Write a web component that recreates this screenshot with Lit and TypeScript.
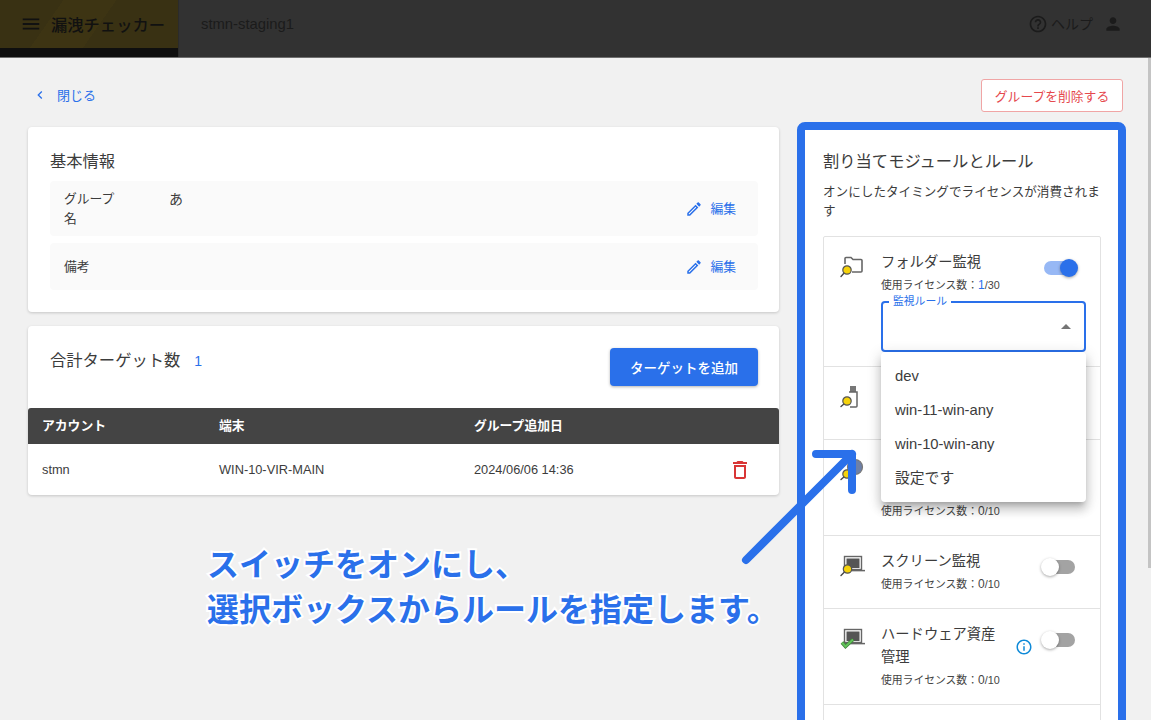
import { LitElement, html, css, svg } from 'lit';
import { customElement } from 'lit/decorators.js';

const P = {
  menu: 'M3 18h18v-2H3v2zm0-5h18v-2H3v2zm0-7v2h18V6H3z',
  back: 'M15.41 7.41L14 6l-6 6 6 6 1.41-1.41L10.83 12z',
  help: 'M11 18h2v-2h-2v2zm1-16C6.48 2 2 6.48 2 12s4.48 10 10 10 10-4.48 10-10S17.52 2 12 2zm0 18c-4.41 0-8-3.59-8-8s3.59-8 8-8 8 3.59 8 8-3.59 8-8 8zm0-14c-2.21 0-4 1.79-4 4h2c0-1.1.9-2 2-2s2 .9 2 2c0 2-3 1.75-3 5h2c0-2.25 3-2.5 3-5 0-2.21-1.79-4-4-4z',
  user: 'M12 12c2.21 0 4-1.79 4-4s-1.79-4-4-4-4 1.79-4 4 1.79 4 4 4zm0 2c-2.67 0-8 1.34-8 4v2h16v-2c0-2.66-5.33-4-8-4z',
  edit: 'M3 17.25V21h3.75L17.81 9.94l-3.75-3.75L3 17.25zM5.92 19H5v-.92l9.06-9.06.92.92L5.92 19zM20.71 5.63l-2.34-2.34c-.2-.2-.45-.29-.71-.29s-.51.1-.7.29l-1.83 1.83 3.75 3.75 1.83-1.83c.39-.39.39-1.02 0-1.41z',
  trash: 'M6 19c0 1.1.9 2 2 2h8c1.1 0 2-.9 2-2V7H6v12zM8 9h8v10H8V9zm7.5-5l-1-1h-5l-1 1H5v2h14V4h-3.5z',
  info: 'M11 7h2v2h-2zm0 4h2v6h-2zm1-9C6.48 2 2 6.48 2 12s4.48 10 10 10 10-4.48 10-10S17.52 2 12 2zm0 18c-4.41 0-8-3.59-8-8s3.59-8 8-8 8 3.59 8 8-3.59 8-8 8z',
};

const icon = (d: string, size: number, cls = '') =>
  html`<svg class=${cls} width=${size} height=${size} viewBox="0 0 24 24" fill="currentColor"><path d=${d}></path></svg>`;

const lens = (cx: number, cy: number) => svg`
  <path d="M${cx - 2.5} ${cy + 2.5}L2 21.5" stroke="#444" stroke-width="1.4" stroke-linecap="round"></path>
  <circle cx=${cx} cy=${cy} r="4.2" fill="#f5d20a" stroke="#555" stroke-width="1.2"></circle>`;

const screen = svg`
  <rect x="5.5" y="2.5" width="17" height="13" fill="#fff" stroke="#666" stroke-width="1.4"></rect>
  <rect x="7.5" y="4.5" width="13" height="9.5" fill="#555"></rect>
  <path d="M4 16.6H26" stroke="#666" stroke-width="1.5"></path>`;

const moduleIcons: Record<string, unknown> = {
  folder: svg`<path d="M6 9V3.5Q6 2.5 7 2.5H12L14 4.5H22Q23 4.5 23 5.5V16Q23 17 22 17H13" fill="none" stroke="#666" stroke-width="1.6"></path>${lens(8, 15)}`,
  usb: svg`<rect x="11" y="1" width="6" height="6" fill="#777"></rect><path d="M10 7H18V21Q18 22 17 22H11" fill="none" stroke="#666" stroke-width="1.5"></path>${lens(8, 16)}`,
  globe: svg`<circle cx="16" cy="9" r="7.5" fill="#6d80a8" stroke="#777" stroke-width="1.2"></circle>${lens(8, 16)}`,
  screen: svg`${screen}${lens(8.5, 15)}`,
  hardware: svg`${screen}
    <path d="M3 15.5L6.5 19.5L14 12.5" fill="none" stroke="#3f7f3c" stroke-width="3.6"></path>
    <path d="M3 15.5L6.5 19.5L14 12.5" fill="none" stroke="#62c25a" stroke-width="2"></path>`,
};

const modules = [
  { icon: 'folder', title: 'フォルダー監視', used: 1, total: 30, on: true, select: true },
  { icon: 'usb', title: '', covered: true },
  { icon: 'globe', title: '', tall: true, used: 0, total: 10 },
  { icon: 'screen', title: 'スクリーン監視', used: 0, total: 10 },
  { icon: 'hardware', title: 'ハードウェア資産管理', used: 0, total: 10, info: true },
];

const rules = ['dev', 'win-11-win-any', 'win-10-win-any', '設定です'];

@customElement('app-root')
export class AppRoot extends LitElement {
  static styles = css`
    :host {
      display: block;
      position: relative;
      height: 720px;
      overflow: hidden;
      background: #f1f1f1;
      color: #3c3c3c;
      font-family: 'Liberation Sans', 'Noto Sans CJK JP', sans-serif;
    }
    svg { display: block; flex-shrink: 0; }

    .header {
      display: flex;
      align-items: flex-start;
      height: 58px;
      box-sizing: border-box;
      background: #323232;
      border-bottom: 1px solid #6f6f6f;
      color: #1b1b1b;
    }
    .brand {
      width: 179px;
      height: 57px;
      flex-shrink: 0;
      border-right: 1px solid #2b2b2b;
      box-sizing: border-box;
      background: #0f0f0f;
    }
    .brand-inner {
      display: flex;
      align-items: center;
      gap: 9px;
      height: 48px;
      padding-left: 20px;
      box-sizing: border-box;
      background: linear-gradient(125deg, #393113 0 30%, #3d3413 30% 55%, #393113 55%);
      color: #111;
      font-size: 16.3px;
      font-weight: 500;
    }
    .env {
      margin: 16px 0 0 22px;
      font-size: 14.8px;
      line-height: 17px;
    }
    .header-right {
      display: flex;
      align-items: center;
      margin-left: auto;
      height: 48px;
      padding-right: 28px;
      font-size: 14px;
    }
    .help { margin: 0 3px 0 0; }
    .help-label { margin-bottom: 2px; }
    .user { margin-left: 10px; }

    .main { padding: 21px 28px 0; }
    .topbar {
      display: flex;
      justify-content: space-between;
      align-items: center;
      height: 33px;
      margin-bottom: 15px;
    }
    .back {
      display: flex;
      align-items: center;
      gap: 9px;
      margin: 0 0 2px 4px;
      color: #2a70ea;
      font-size: 13px;
    }
    .delete {
      width: 142px;
      height: 33px;
      box-sizing: border-box;
      display: flex;
      align-items: center;
      justify-content: center;
      background: #fff;
      border: 1px solid #f0a5a5;
      border-radius: 3px;
      color: #e5484d;
      font-size: 12.8px;
    }
    .columns {
      display: grid;
      grid-template-columns: 751px 329px;
      gap: 18px;
      align-items: start;
    }
    .card {
      background: #fff;
      border-radius: 4px;
      box-shadow: 0 1px 3px rgba(0, 0, 0, 0.18);
      margin-bottom: 14px;
    }
    .info-card { padding: 22px 21px 22px 22px; }
    .heading {
      font-size: 16.3px;
      line-height: 24px;
      color: #3c3c3c;
    }
    .info-card .heading { margin-bottom: 8px; }
    .info-row {
      display: flex;
      align-items: flex-start;
      background: #fafafa;
      border-radius: 4px;
      padding: 8px 22px 7px 14px;
      font-size: 12.8px;
      line-height: 20px;
    }
    .info-row + .info-row { margin-top: 7px; padding-top: 14px; padding-bottom: 13px; }
    .label { width: 58px; margin-right: 47px; }
    .value { flex: 1; font-size: 14px; }
    .edit {
      display: flex;
      align-items: center;
      gap: 7px;
      align-self: center;
      color: #2a70ea;
      font-size: 12.8px;
    }

    .targets-head {
      display: flex;
      justify-content: space-between;
      padding: 22px 21px 22px 22px;
    }
    .count { color: #2a70ea; margin-left: 14px; font-size: 14px; }
    .add {
      width: 148px;
      height: 38px;
      display: flex;
      align-items: center;
      justify-content: center;
      background: #2a70ea;
      border-radius: 4px;
      color: #fff;
      font-size: 13.5px;
      font-weight: 500;
      box-shadow: 0 1px 3px rgba(0, 0, 0, 0.3);
    }
    .table-row {
      display: grid;
      grid-template-columns: 177px 255px 258px 1fr;
      align-items: center;
      padding-left: 14px;
      font-size: 12.8px;
    }
    .table-head {
      height: 36px;
      line-height: 34px;
      background: #444;
      color: #fff;
      font-weight: 700;
      border-radius: 3px 3px 0 0;
    }
    .table-body { height: 51px; color: #3c3c3c; }
    .trash { color: #d93636; margin-left: -4px; }

    .panel {
      margin-top: -5px;
      box-sizing: border-box;
      height: 640px;
      background: #fff;
      border: 8px solid #2a70ea;
      border-radius: 8px;
      padding: 17px 17px 0 18px;
    }
    .panel .heading { line-height: 28px; }
    .note {
      margin: 8px 0 15px;
      font-size: 12.6px;
      line-height: 19px;
      color: #3c3c3c;
    }
    .modules {
      border: 1px solid #e2e2e2;
      border-radius: 2px;
    }
    .module {
      display: grid;
      grid-template-columns: 26px 118px 1fr;
      column-gap: 16px;
      padding: 14px 14px 15px 15px;
      border-bottom: 1px solid #e2e2e2;
    }
    .module.empty { height: 60px; }
    .module-icon { margin-top: 4px; }
    .title {
      font-size: 14.3px;
      line-height: 23px;
      min-height: 23px;
      color: #3c3c3c;
    }
    .title.tall { min-height: 46px; }
    .usage {
      margin-top: 2px;
      font-size: 10.8px;
      line-height: 18px;
      height: 18px;
      white-space: nowrap;
      color: #444;
    }
    .usage b { font-weight: 400; font-size: 12px; }
    .usage b.active { color: #2a70ea; }
    .controls {
      display: flex;
      justify-content: flex-end;
      padding-right: 11px;
      gap: 11px;
    }
    .info { color: #0f8ad8; margin-top: 15px; }
    .switch {
      display: flex;
      align-items: center;
      width: 31px;
      height: 14px;
      margin-top: 10px;
      border-radius: 7px;
      background: #a3a3a3;
    }
    .switch.on { justify-content: flex-end; background: #97b8f5; }
    .thumb {
      width: 18px;
      height: 18px;
      flex-shrink: 0;
      margin: 0 -3px;
      border-radius: 50%;
      background: #fff;
      box-shadow: 0 1px 3px rgba(0, 0, 0, 0.35);
    }
    .switch.on .thumb { background: #2a70ea; }

    .select {
      grid-column: 2 / 4;
      position: relative;
      z-index: 2;
      display: flex;
      align-items: center;
      justify-content: flex-end;
      height: 51px;
      margin: 7px 0 -1px;
      padding-right: 13px;
      box-sizing: border-box;
      border: 2px solid #2a70ea;
      border-radius: 4px;
    }
    .select-label {
      position: absolute;
      top: -9px;
      left: 6px;
      padding: 0 4px;
      background: #fff;
      color: #2a70ea;
      font-size: 10.8px;
      line-height: 14px;
    }
    .caret {
      width: 0;
      height: 0;
      border-left: 5px solid transparent;
      border-right: 5px solid transparent;
      border-bottom: 5px solid #757575;
    }
    .menu {
      position: absolute;
      top: 100%;
      left: -2px;
      right: -2px;
      margin-top: 2px;
      padding: 7px 0;
      background: #fff;
      border-radius: 4px;
      box-shadow: 0 5px 5px -3px rgba(0, 0, 0, 0.2), 0 8px 10px 1px rgba(0, 0, 0, 0.14), 0 3px 14px 2px rgba(0, 0, 0, 0.12);
    }
    .menu div {
      height: 34px;
      line-height: 34px;
      padding-left: 14px;
      font-size: 14.8px;
      color: #3c3c3c;
    }

    .arrow { position: absolute; left: 0; top: 0; pointer-events: none; z-index: 3; }
    .callout {
      position: absolute;
      left: 207px;
      top: 540px;
      z-index: 3;
      color: #2a70ea;
      font-family: 'Noto Sans CJK JP', sans-serif;
      font-size: 32px;
      font-weight: 700;
      line-height: 45px;
      white-space: nowrap;
      -webkit-text-stroke: 4px #fff;
      paint-order: stroke fill;
    }
    .scroll {
      position: absolute;
      right: 0;
      top: 58px;
      width: 3px;
      height: 510px;
      background: #c4c4c4;
      z-index: 4;
    }
  `;

  renderModule(m: any) {
    return html`
      <div class="module">
        <svg class="module-icon" width="26" height="24" viewBox="0 0 26 24">${moduleIcons[m.icon]}</svg>
        <div>
          <div class="title ${m.tall ? 'tall' : ''}">${m.title}</div>
          <div class="usage">
            ${m.covered
              ? ''
              : html`使用ライセンス数：<b class=${m.used ? 'active' : ''}>${m.used}</b>/${m.total}`}
          </div>
        </div>
        <div class="controls">
          ${m.info ? icon(P.info, 18, 'info') : ''}
          <div class="switch ${m.on ? 'on' : ''}"><div class="thumb"></div></div>
        </div>
        ${m.select
          ? html`<div class="select">
              <span class="select-label">監視ルール</span>
              <span class="caret"></span>
              <div class="menu">${rules.map((r) => html`<div>${r}</div>`)}</div>
            </div>`
          : ''}
      </div>
    `;
  }

  render() {
    return html`
      <div class="header">
        <div class="brand">
          <div class="brand-inner">${icon(P.menu, 22)}<span>漏洩チェッカー</span></div>
        </div>
        <div class="env">stmn-staging1</div>
        <div class="header-right">
          ${icon(P.help, 20, 'help')}<span class="help-label">ヘルプ</span>${icon(P.user, 20, 'user')}
        </div>
      </div>

      <div class="main">
        <div class="topbar">
          <div class="back">${icon(P.back, 16)}<span>閉じる</span></div>
          <div class="delete">グループを削除する</div>
        </div>
        <div class="columns">
          <div>
            <div class="card info-card">
              <div class="heading">基本情報</div>
              <div class="info-row">
                <div class="label">グループ名</div>
                <div class="value">あ</div>
                <div class="edit">${icon(P.edit, 18)}<span>編集</span></div>
              </div>
              <div class="info-row">
                <div class="label">備考</div>
                <div class="value"></div>
                <div class="edit">${icon(P.edit, 18)}<span>編集</span></div>
              </div>
            </div>
            <div class="card">
              <div class="targets-head">
                <div class="heading">合計ターゲット数<span class="count">1</span></div>
                <div class="add">ターゲットを追加</div>
              </div>
              <div class="table-row table-head">
                <span>アカウント</span><span>端末</span><span>グループ追加日</span><span></span>
              </div>
              <div class="table-row table-body">
                <span>stmn</span><span>WIN-10-VIR-MAIN</span><span>2024/06/06 14:36</span>
                ${icon(P.trash, 24, 'trash')}
              </div>
            </div>
          </div>

          <div class="panel">
            <div class="heading">割り当てモジュールとルール</div>
            <div class="note">オンにしたタイミングでライセンスが消費されます</div>
            <div class="modules">
              ${modules.map((m) => this.renderModule(m))}
              <div class="module empty"></div>
            </div>
          </div>
        </div>
      </div>

      <svg class="arrow" width="1151" height="720" viewBox="0 0 1151 720" fill="none" stroke="#2a70ea" stroke-width="8" stroke-linecap="round" stroke-linejoin="round">
        <path d="M816 454H852V490M852 454L746 560"></path>
      </svg>
      <div class="callout">スイッチをオンにし、<br />選択ボックスからルールを指定します。</div>
      <div class="scroll"></div>
    `;
  }
}
